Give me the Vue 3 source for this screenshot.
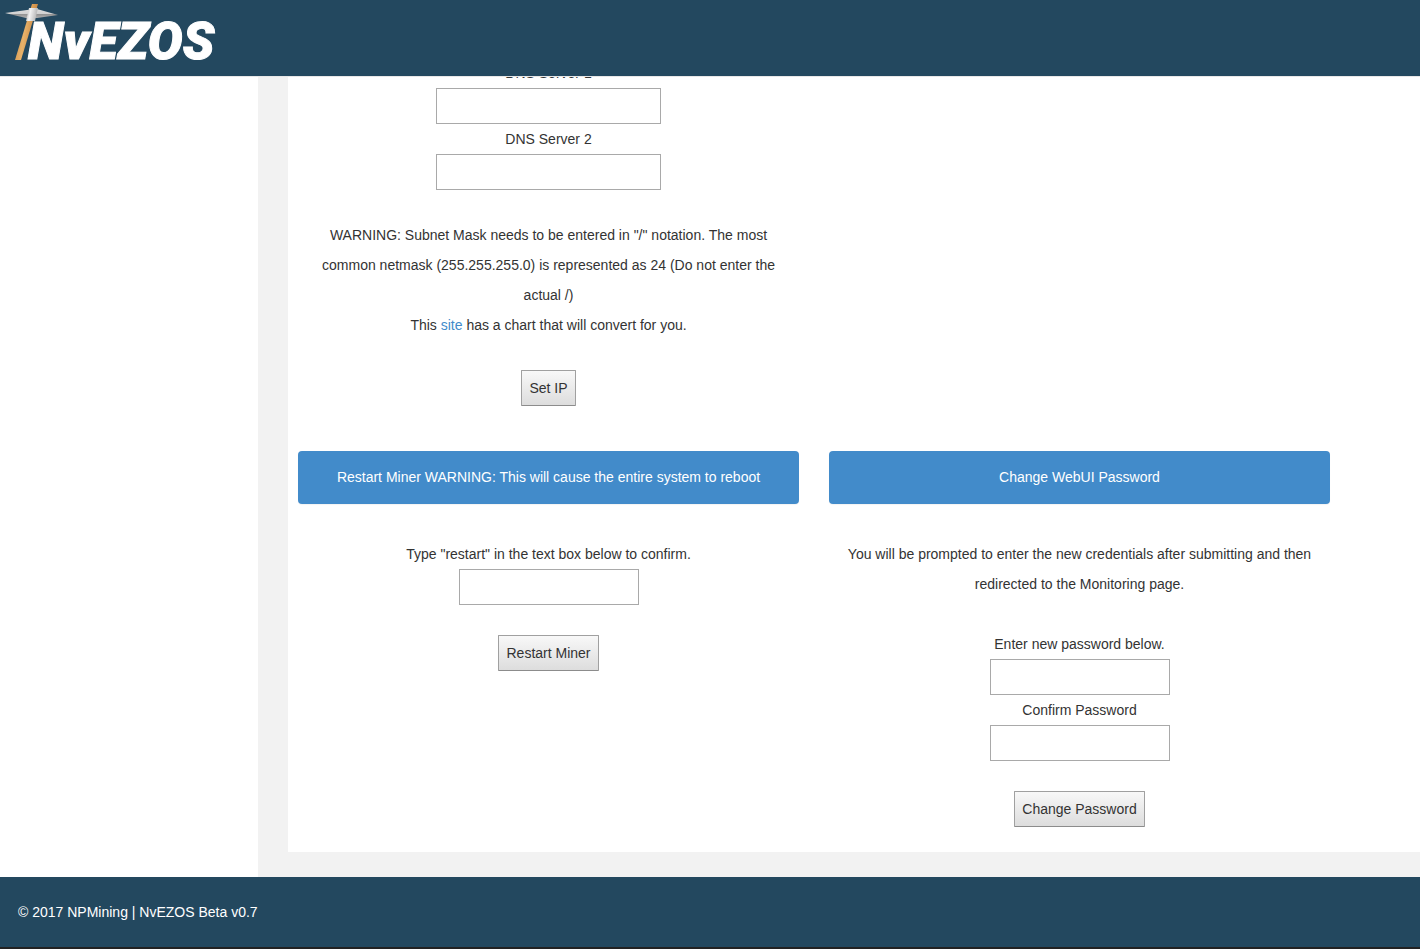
<script setup>
import { ref } from 'vue'

const dns1 = ref('')
const dns2 = ref('')
const restart = ref('')
const password = ref('')
const confirm = ref('')
</script>

<template>
  <div class="page">
    <header class="topbar">
      <a class="brand" href="#" aria-label="NvEZOS">
        <svg width="230" height="76" viewBox="0 0 230 76" aria-hidden="true">
          <defs>
            <linearGradient id="wood" x1="0" y1="0" x2="1" y2="0.3">
              <stop offset="0" stop-color="#c98b45" />
              <stop offset="0.5" stop-color="#e8b26a" />
              <stop offset="1" stop-color="#c4813a" />
            </linearGradient>
            <linearGradient id="steel" x1="0" y1="0" x2="0" y2="1">
              <stop offset="0" stop-color="#dedede" />
              <stop offset="0.5" stop-color="#d2d2d2" />
              <stop offset="0.55" stop-color="#909090" />
              <stop offset="1" stop-color="#b0b0b0" />
            </linearGradient>
            <linearGradient id="collar" x1="0" y1="0" x2="1" y2="0.2">
              <stop offset="0" stop-color="#a8a8a8" />
              <stop offset="0.4" stop-color="#f2f2f2" />
              <stop offset="1" stop-color="#b4b4b4" />
            </linearGradient>
          </defs>
          <path d="M32 4H38L21 60H15Z" fill="url(#wood)" />
          <path d="M5 13L27 10L37 9L58 15L37 18L26 18Z" fill="url(#steel)" />
          <path d="M29 8H38L35 21H26Z" fill="url(#collar)" />
          <text class="wordmark" x="28" y="59">NvEZOS</text>
        </svg>
      </a>
    </header>

    <div class="layout">
      <aside class="sidebar"></aside>
      <main class="content">
        <div class="panel">
          <form class="block network" @submit.prevent>
            <label for="dns1">DNS Server 1</label>
            <input id="dns1" v-model="dns1" class="wide" type="text" />
            <label for="dns2">DNS Server 2</label>
            <input id="dns2" v-model="dns2" class="wide" type="text" />
            <div class="note">
              <p>WARNING: Subnet Mask needs to be entered in "/" notation. The most common netmask (255.255.255.0) is represented as 24 (Do not enter the actual /)</p>
              <p>This <a href="#">site</a> has a chart that will convert for you.</p>
            </div>
            <button type="submit">Set IP</button>
          </form>

          <section class="card restart">
            <h2>Restart Miner WARNING: This will cause the entire system to reboot</h2>
            <form class="block" @submit.prevent>
              <label for="restart">Type "restart" in the text box below to confirm.</label>
              <input id="restart" v-model="restart" type="text" />
              <button type="submit">Restart Miner</button>
            </form>
          </section>

          <section class="card">
            <h2>Change WebUI Password</h2>
            <form class="block" @submit.prevent>
              <p class="intro">You will be prompted to enter the new credentials after submitting and then redirected to the Monitoring page.</p>
              <label for="password">Enter new password below.</label>
              <input id="password" v-model="password" type="password" />
              <label for="confirm">Confirm Password</label>
              <input id="confirm" v-model="confirm" type="password" />
              <button type="submit">Change Password</button>
            </form>
          </section>
        </div>
      </main>
    </div>

    <footer class="footer">© 2017 NPMining | NvEZOS Beta v0.7</footer>
  </div>
</template>

<style>
body {
  margin: 0;
  background: #fff;
}
</style>

<style scoped>
.page {
  display: flex;
  flex-direction: column;
  min-height: 100vh;
  font-family: "Liberation Sans", Arial, sans-serif;
  font-size: 14px;
  line-height: 30px;
  color: #333;
}
.topbar {
  position: fixed;
  top: 0;
  left: 0;
  right: 0;
  z-index: 10;
  height: 76px;
  background: #23485f;
  border-bottom: 1px solid #e7e7e7;
}
.brand {
  display: inline-block;
}
.brand svg {
  display: block;
}
.wordmark {
  font-family: Roboto, "Liberation Sans", sans-serif;
  font-size: 52px;
  font-weight: 900;
  font-style: italic;
  fill: #fff;
  stroke: #fff;
  stroke-width: 1px;
}
.layout {
  flex: 1;
  display: flex;
}
.sidebar {
  flex: 0 0 258px;
  background: #fff;
}
.content {
  flex: 1;
  padding: 58px 0 25px 30px;
  background: #f2f2f2;
}
.panel {
  display: grid;
  grid-template-columns: 1fr 1fr;
  column-gap: 30px;
  row-gap: 45px;
  padding: 0 90px 25px 10px;
  background: #fff;
}
.network {
  grid-column: 1;
}
.restart {
  grid-column: 1;
}
.block {
  display: flex;
  flex-direction: column;
  align-items: center;
  padding: 0 15px;
  text-align: center;
}
.card .block {
  padding-top: 35px;
}
h2 {
  margin: 0;
  padding: 11px 15px 12px;
  border-radius: 4px;
  background: #428bca;
  box-shadow: 0 1px 1px rgba(0, 0, 0, 0.05);
  color: #fff;
  font-size: 14px;
  font-weight: 400;
  line-height: 30px;
  text-align: center;
}
p {
  margin: 0;
}
.note {
  margin-top: 30px;
}
.note a {
  color: #428bca;
  text-decoration: none;
}
.intro {
  margin-bottom: 30px;
}
input {
  box-sizing: border-box;
  width: 180px;
  height: 36px;
  padding: 2px 6px;
  border: 1px solid #a9a9a9;
  border-radius: 0;
  background: #fff;
  color: inherit;
  font: inherit;
}
input.wide {
  width: 225px;
}
button {
  height: 36px;
  margin-top: 30px;
  padding: 0 7px;
  border: 1px solid #a0a0a0;
  border-bottom-color: #8c8c8c;
  border-radius: 1px;
  background: linear-gradient(#f8f8f8, #dddddd);
  color: #333;
  font: inherit;
}
.footer {
  padding: 20px 18px;
  background: #23485f;
  border-bottom: 2px solid #222;
  color: #fff;
}
</style>
